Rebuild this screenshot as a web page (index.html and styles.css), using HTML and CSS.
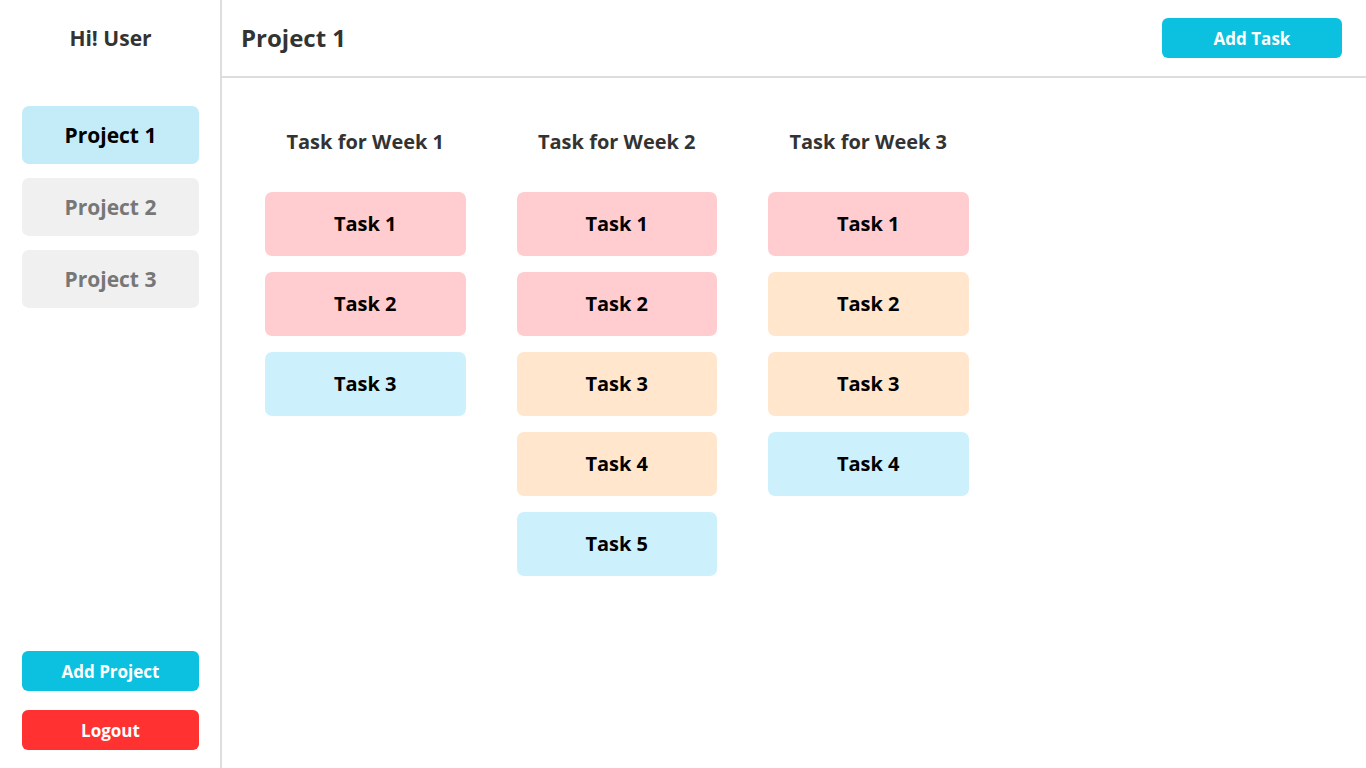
FILE: index.html
```html
<!DOCTYPE html>
<html lang="en">
<head>
<meta charset="UTF-8">
<title>Project 1</title>
<link rel="stylesheet" href="styles.css">
</head>
<body>
	<aside class="sidebar">
		<div class="hello">Hi! User</div>
		<ul class="projects">
			<li class="project active">Project 1</li>
			<li class="project">Project 2</li>
			<li class="project">Project 3</li>
		</ul>
		<div class="side-actions">
			<button class="btn btn-blue">Add Project</button>
			<button class="btn btn-red">Logout</button>
		</div>
	</aside>
	<main class="main">
		<header class="top">
			<h1 class="title">Project 1</h1>
			<button class="btn btn-blue add-task">Add Task</button>
		</header>
		<div class="board">
			<section class="week">
				<h2>Task for Week 1</h2>
				<div class="card pink">Task 1</div>
				<div class="card pink">Task 2</div>
				<div class="card blue">Task 3</div>
			</section>
			<section class="week">
				<h2>Task for Week 2</h2>
				<div class="card pink">Task 1</div>
				<div class="card pink">Task 2</div>
				<div class="card peach">Task 3</div>
				<div class="card peach">Task 4</div>
				<div class="card blue">Task 5</div>
			</section>
			<section class="week">
				<h2>Task for Week 3</h2>
				<div class="card pink">Task 1</div>
				<div class="card peach">Task 2</div>
				<div class="card peach">Task 3</div>
				<div class="card blue">Task 4</div>
			</section>
		</div>
	</main>
</body>
</html>
```
FILE: styles.css
```css
body {
	margin: 0;
	display: flex;
	height: 100vh;
	background-color: #fff;
	font-family: "Open Sans", "Noto Sans", sans-serif;
	font-weight: 700;
	color: #333;
}
ul {
	margin: 0;
	padding: 0;
	list-style: none;
}
button {
	font-family: inherit;
	font-weight: 700;
	border: none;
	cursor: pointer;
}
.sidebar {
	width: 222px;
	box-sizing: border-box;
	flex-shrink: 0;
	padding: 0 21px 18px 22px;
	border-right: 2px solid #ddd;
	display: flex;
	flex-direction: column;
}
.hello {
	height: 76px;
	line-height: 76px;
	text-align: center;
	font-size: 21px;
}
.projects {
	margin-top: 30px;
	display: flex;
	flex-direction: column;
	gap: 14px;
}
.project {
	height: 58px;
	line-height: 58px;
	text-align: center;
	font-size: 21px;
	border-radius: 7px;
	background-color: #f0f0f0;
	color: #777;
}
.project.active {
	background-color: #c4ecf8;
	color: #000;
}
.side-actions {
	margin-top: auto;
	display: flex;
	flex-direction: column;
	gap: 19px;
}
.btn {
	height: 40px;
	border-radius: 6px;
	font-size: 17px;
	color: #fff;
}
.btn-blue {
	background-color: #0cc0df;
}
.btn-red {
	background-color: #ff3131;
}
.main {
	flex: 1;
	display: flex;
	flex-direction: column;
}
.top {
	height: 76px;
	border-bottom: 2px solid #ddd;
	display: flex;
	align-items: center;
	justify-content: space-between;
	padding: 0 24px 0 19px;
}
.title {
	margin: 0 0 2px;
	font-size: 24px;
	color: #333;
}
.add-task {
	width: 180px;
}
.board {
	display: flex;
	align-items: flex-start;
	gap: 51px;
	padding: 52px 0 0 43px;
}
.week {
	width: 200.5px;
	display: flex;
	flex-direction: column;
	gap: 16px;
}
.week h2 {
	margin: 0 0 22px;
	height: 24px;
	line-height: 24px;
	text-align: center;
	font-size: 20px;
	color: #333;
}
.card {
	height: 64px;
	line-height: 64px;
	text-align: center;
	border-radius: 7px;
	font-size: 20px;
	color: #000;
}
.pink {
	background-color: #ffcdd0;
}
.peach {
	background-color: #ffe6cc;
}
.blue {
	background-color: #ccf1fc;
}
```
